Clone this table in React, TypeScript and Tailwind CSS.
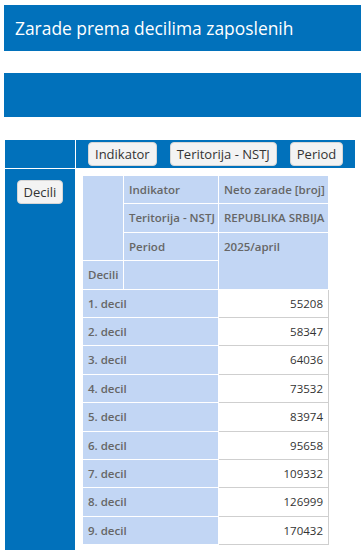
const rows: [string, string][] = [
  ["1. decil", "55208"],
  ["2. decil", "58347"],
  ["3. decil", "64036"],
  ["4. decil", "73532"],
  ["5. decil", "83974"],
  ["6. decil", "95658"],
  ["7. decil", "109332"],
  ["8. decil", "126999"],
  ["9. decil", "170432"],
];

function Btn({ label }: { label: string }) {
  return (
    <button className="h-[24px] px-[6px] rounded-[4px] bg-[#f3f3f3] border border-[#d6d6d6] text-[13px] text-[#333] leading-none whitespace-nowrap">
      {label}
    </button>
  );
}

const head = "bg-[#c2d6f4] border-r border-b border-white text-left align-top px-[5px] py-[5px] leading-[17.4px] font-semibold text-[#666] whitespace-nowrap overflow-hidden";

export default function App() {
  return (
    <div className="pt-[5px] pl-[4px] font-['Open_Sans',sans-serif]">
      <div className="h-[46px] bg-[#0171bb] text-white text-[17.4px] pl-[11px] flex items-center">
        Zarade prema decilima zaposlenih
      </div>
      <div className="mt-[22px] h-[44px] bg-[#0171bb]" />

      <div className="mt-[23px] ml-px">
        <div className="flex gap-px h-[28px]">
          <div className="w-[70px] bg-[#0171bb]" />
          <div className="w-[279px] bg-[#0171bb] flex items-center gap-[13px] pl-[12px]">
            <Btn label="Indikator" />
            <Btn label="Teritorija - NSTJ" />
            <Btn label="Period" />
          </div>
        </div>
        <div className="flex gap-px mt-px">
          <div className="w-[70px] h-[381px] bg-[#0171bb] flex justify-center pt-[11px]">
            <Btn label="Decili" />
          </div>
          <div className="pl-[7px] pt-[7px]">
            <table className="border-separate border-spacing-0 table-fixed text-[11.5px] w-[246px]">
              <colgroup>
                <col className="w-[41px]" />
                <col className="w-[95px]" />
                <col className="w-[110px]" />
              </colgroup>
              <tbody>
                <tr>
                  <td rowSpan={3} className={head}></td>
                  <td className={head}>Indikator</td>
                  <td className={head}>Neto zarade [broj]</td>
                </tr>
                <tr>
                  <td className={head}>Teritorija - NSTJ</td>
                  <td className={head}>REPUBLIKA SRBIJA</td>
                </tr>
                <tr>
                  <td className={head}>Period</td>
                  <td rowSpan={2} className={head}>2025/april</td>
                </tr>
                <tr>
                  <td className={head}>Decili</td>
                  <td className={head}></td>
                </tr>
                {rows.map(([l, v]) => (
                  <tr key={l}>
                    <td colSpan={2} className={head}>{l}</td>
                    <td className="bg-white border-r border-b border-[#cfcfcf] text-right px-[5px] py-[5px] leading-[17.4px] text-[#333]">
                      {v}
                    </td>
                  </tr>
                ))}
              </tbody>
            </table>
          </div>
        </div>
      </div>
    </div>
  );
}
